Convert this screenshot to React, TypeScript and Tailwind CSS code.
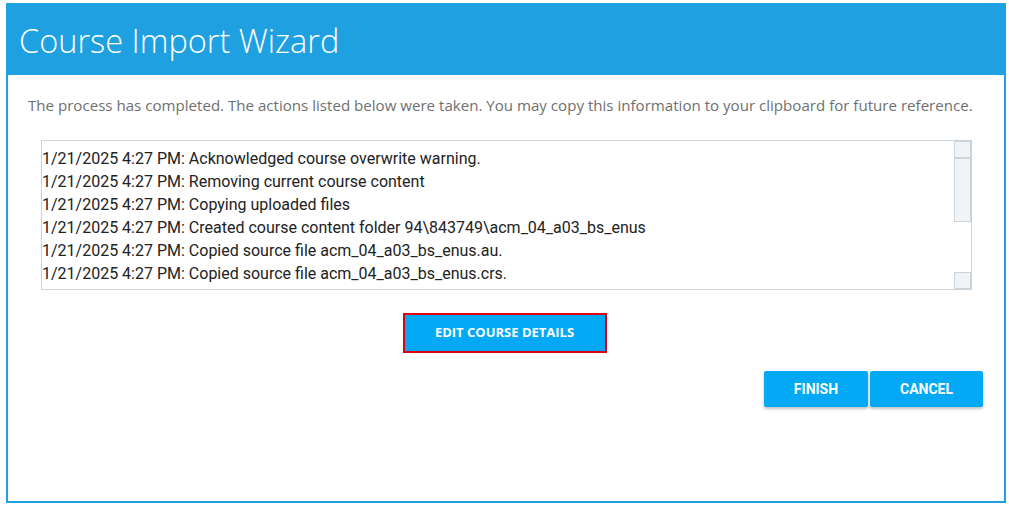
import React from "react";

const lines = [
  "1/21/2025 4:27 PM: Acknowledged course overwrite warning.",
  "1/21/2025 4:27 PM: Removing current course content",
  "1/21/2025 4:27 PM: Copying uploaded files",
  "1/21/2025 4:27 PM: Created course content folder 94\\843749\\acm_04_a03_bs_enus",
  "1/21/2025 4:27 PM: Copied source file acm_04_a03_bs_enus.au.",
  "1/21/2025 4:27 PM: Copied source file acm_04_a03_bs_enus.crs.",
];

export default function App() {
  return (
    <div className="w-[1009px] h-[506px] bg-white pt-[3px] pl-[6px]">
      <div className="w-[1000px] h-[500px] border-2 border-t-0 border-[#1fa0e0] flex flex-col">
        <div className="h-[72px] bg-[#1fa0e0] -mx-[2px] pl-[13px] flex items-center">
          <span
            className="text-white text-[32.5px] font-light leading-none pt-[4px]"
            style={{ fontFamily: "'Open Sans', sans-serif" }}
          >
            Course Import Wizard
          </span>
        </div>
        <div
          className="pl-[20px] pt-[19px] text-[15.1px] leading-[22px] text-[#6f6f6f]"
          style={{ fontFamily: "'Open Sans', sans-serif" }}
        >
          The process has completed. The actions listed below were taken. You may copy this information to your clipboard for future reference.
        </div>
        <div className="ml-[33px] mt-[24px] w-[931px] h-[150px] border border-[#cdd4d9] flex">
          <div
            className="flex-1 pt-[6px] text-[16px] leading-[23px] text-[#222]"
            style={{ fontFamily: "Roboto, sans-serif" }}
          >
            {lines.map((l) => (
              <div key={l} className="whitespace-nowrap">{l}</div>
            ))}
          </div>
          <div className="w-[17px] flex flex-col">
            <div className="h-[17px] bg-[#f0f4f6] border border-[#cdd4d9]" />
            <div className="h-[64px] bg-[#f0f4f6] border border-[#cdd4d9]" />
            <div className="flex-1" />
            <div className="h-[17px] bg-[#f0f4f6] border border-[#cdd4d9]" />
          </div>
        </div>
        <div className="flex justify-center mt-[23px] pr-[3px]">
          <div className="border-2 border-[#e0000f] w-[204px] h-[40px] bg-[#03a9f4] flex items-center justify-center">
            <span
              className="text-white text-[13px] font-bold"
              style={{ fontFamily: "'Open Sans', sans-serif" }}
            >
              EDIT COURSE DETAILS
            </span>
          </div>
        </div>
        <div className="flex justify-end gap-[2px] mt-[18px] pr-[21px]">
          <button
            className="w-[104px] h-[36px] bg-[#03a9f4] rounded-[2px] text-white text-[14px] font-bold shadow-[0_2px_3px_rgba(0,0,0,0.25)]"
            style={{ fontFamily: "Roboto, sans-serif" }}
          >
            FINISH
          </button>
          <button
            className="w-[113px] h-[36px] bg-[#03a9f4] rounded-[2px] text-white text-[14px] font-bold shadow-[0_2px_3px_rgba(0,0,0,0.25)]"
            style={{ fontFamily: "Roboto, sans-serif" }}
          >
            CANCEL
          </button>
        </div>
      </div>
    </div>
  );
}
